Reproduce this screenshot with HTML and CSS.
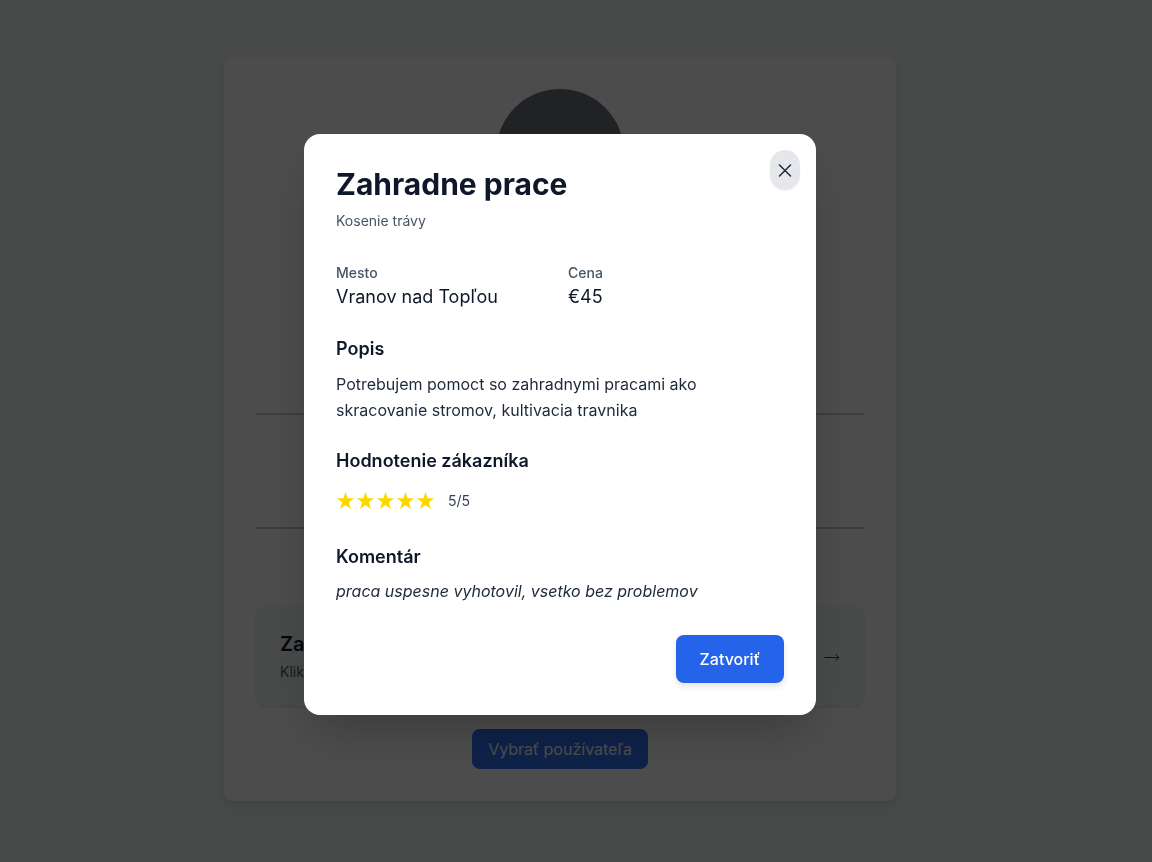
FILE: index.html
```html
<!DOCTYPE html>
<html lang="sk">
<head>
<meta charset="utf-8">
<meta name="viewport" content="width=device-width, initial-scale=1">
<title>Zahradne prace</title>
<link rel="stylesheet" href="styles.css">
</head>
<body>
<main class="page">
  <section class="profile">
    <div class="avatar"></div>
    <div class="profile-summary"></div>
    <div class="profile-details"></div>
    <article class="job">
      <div>
        <h2 class="job-title">Zahradne prace</h2>
        <p class="job-hint">Kliknite pre detail</p>
      </div>
      <svg class="job-arrow" width="16" height="16" viewBox="0 0 16 16" fill="none" stroke="currentColor" aria-hidden="true"><path d="M0.500 9.500H15M11.500 6.500L15 9.500L11.500 12.500"/></svg>
    </article>
    <button class="button button-select" type="button">Vybrať používateľa</button>
  </section>
</main>
<div class="overlay">
  <div class="modal" role="dialog" aria-modal="true" aria-labelledby="modal-title">
    <button class="close" type="button" aria-label="Zatvoriť okno">
      <svg width="14" height="14" viewBox="0 0 14 14" fill="none" stroke="currentColor" stroke-width="1.5" stroke-linecap="round" aria-hidden="true"><path d="M1.500 2L12.500 13M12.500 2L1.500 13"/></svg>
    </button>
    <h1 class="title" id="modal-title">Zahradne prace</h1>
    <p class="category">Kosenie trávy</p>
    <dl class="facts">
      <div><dt>Mesto</dt><dd>Vranov nad Topľou</dd></div>
      <div><dt>Cena</dt><dd>€45</dd></div>
    </dl>
    <section class="block">
      <h2 class="heading">Popis</h2>
      <p class="text">Potrebujem pomoct so zahradnymi pracami ako skracovanie stromov, kultivacia travnika</p>
    </section>
    <section class="block">
      <h2 class="heading">Hodnotenie zákazníka</h2>
      <div class="rating">
        <div class="stars" aria-hidden="true">
          <svg class="star" viewBox="0 0 20 20"><path d="M9.500 1L11.600 7.300H18.300L12.900 11.300L14.900 18L9.500 14L4.100 18L6.100 11.300L0.700 7.300H7.400Z"/></svg>
          <svg class="star" viewBox="0 0 20 20"><path d="M9.500 1L11.600 7.300H18.300L12.900 11.300L14.900 18L9.500 14L4.100 18L6.100 11.300L0.700 7.300H7.400Z"/></svg>
          <svg class="star" viewBox="0 0 20 20"><path d="M9.500 1L11.600 7.300H18.300L12.900 11.300L14.900 18L9.500 14L4.100 18L6.100 11.300L0.700 7.300H7.400Z"/></svg>
          <svg class="star" viewBox="0 0 20 20"><path d="M9.500 1L11.600 7.300H18.300L12.900 11.300L14.900 18L9.500 14L4.100 18L6.100 11.300L0.700 7.300H7.400Z"/></svg>
          <svg class="star" viewBox="0 0 20 20"><path d="M9.500 1L11.600 7.300H18.300L12.900 11.300L14.900 18L9.500 14L4.100 18L6.100 11.300L0.700 7.300H7.400Z"/></svg>
        </div>
        <span class="score">5/5</span>
      </div>
    </section>
    <section class="block">
      <h2 class="heading">Komentár</h2>
      <p class="text comment">praca uspesne vyhotovil, vsetko bez problemov</p>
    </section>
    <div class="actions">
      <button class="button button-close" type="button">Zatvoriť</button>
    </div>
  </div>
</div>
</body>
</html>
```
FILE: styles.css
```css
* {
  box-sizing: border-box;
}

body {
  margin: 0;
  background: #f0f8f3;
  color: #0f172a;
  font-family: Inter, "Liberation Sans", sans-serif;
  font-size: 16px;
  line-height: 24px;
}

h1,
h2,
p,
dl,
dd {
  margin: 0;
}

.page {
  min-height: 100vh;
  padding: 57px 32px 57px 0;
}

.profile {
  display: flex;
  flex-direction: column;
  align-items: center;
  max-width: 672px;
  margin: 0 auto;
  padding: 32px;
  border-radius: 8px;
  background: #fff;
  box-shadow: 0 10px 15px rgba(0, 0, 0, 0.05), 0 2px 6px rgba(0, 0, 0, 0.08);
}

.avatar {
  width: 128px;
  height: 128px;
  border-radius: 50%;
  background: #6b7280;
}

.profile-summary {
  align-self: stretch;
  height: 198px;
  border-bottom: 2px solid #c4c8cc;
}

.profile-details {
  align-self: stretch;
  height: 114px;
  margin-bottom: 77px;
  border-bottom: 2px solid #c4c8cc;
}

.job {
  display: flex;
  align-self: stretch;
  align-items: center;
  justify-content: space-between;
  margin-bottom: 23px;
  padding: 24px;
  border-radius: 12px;
  background: #f2f8f6;
  box-shadow: 0 1px 3px rgba(0, 0, 0, 0.16);
}

.job-title {
  font-size: 20px;
  font-weight: 600;
  line-height: 28px;
}

.job-hint {
  margin-top: 4px;
  color: #475569;
  font-size: 14px;
  line-height: 20px;
}

.job-arrow {
  color: #1e3a8a;
}

.button {
  border: 0;
  border-radius: 8px;
  background: #2563eb;
  color: #fff;
  font: inherit;
  cursor: pointer;
}

.button-select {
  padding: 8px 16px;
  background: #3070f0;
}

.overlay {
  position: fixed;
  inset: 0;
  display: flex;
  align-items: center;
  justify-content: center;
  padding: 0 32px 13px 0;
  background: rgba(0, 0, 0, 0.7);
}

.modal {
  position: relative;
  width: 100%;
  max-width: 512px;
  padding: 32px;
  border-radius: 16px;
  background: #fff;
  box-shadow: 0 24px 48px -12px rgba(0, 0, 0, 0.25);
}

.close {
  position: absolute;
  top: 16px;
  right: 16px;
  display: flex;
  align-items: center;
  justify-content: center;
  width: 30px;
  height: 40px;
  padding: 0;
  border: 0;
  border-radius: 15px;
  background: #e5e7eb;
  box-shadow: 0 1px 2px rgba(0, 0, 0, 0.05);
  color: #1e293b;
  cursor: pointer;
}

.title {
  font-size: 30px;
  font-weight: 700;
  line-height: 37px;
}

.category {
  margin-top: 8px;
  color: #475569;
  font-size: 14px;
  line-height: 20px;
}

.facts {
  display: grid;
  grid-template-columns: 1fr 1fr;
  gap: 16px;
  margin-top: 32px;
}

.facts dt {
  color: #475569;
  font-size: 14px;
  font-weight: 500;
  line-height: 20px;
}

.facts dd {
  font-size: 18px;
  line-height: 28px;
}

.block {
  margin-top: 24px;
}

.heading {
  margin-bottom: 8px;
  font-size: 18px;
  font-weight: 600;
  line-height: 28px;
}

.text {
  color: #1e293b;
  font-size: 16px;
  line-height: 26px;
}

.comment {
  line-height: 24px;
  font-style: italic;
}

.rating {
  display: flex;
  align-items: center;
  gap: 12px;
  height: 36px;
}

.stars {
  display: flex;
}

.star {
  width: 20px;
  height: 20px;
  fill: #ffd700;
}

.score {
  color: #334155;
  font-size: 14px;
}

.actions {
  display: flex;
  justify-content: flex-end;
  margin-top: 32px;
}

.button-close {
  padding: 12px 24px;
  box-shadow: 0 4px 6px rgba(0, 0, 0, 0.1);
  font-weight: 500;
}
```
